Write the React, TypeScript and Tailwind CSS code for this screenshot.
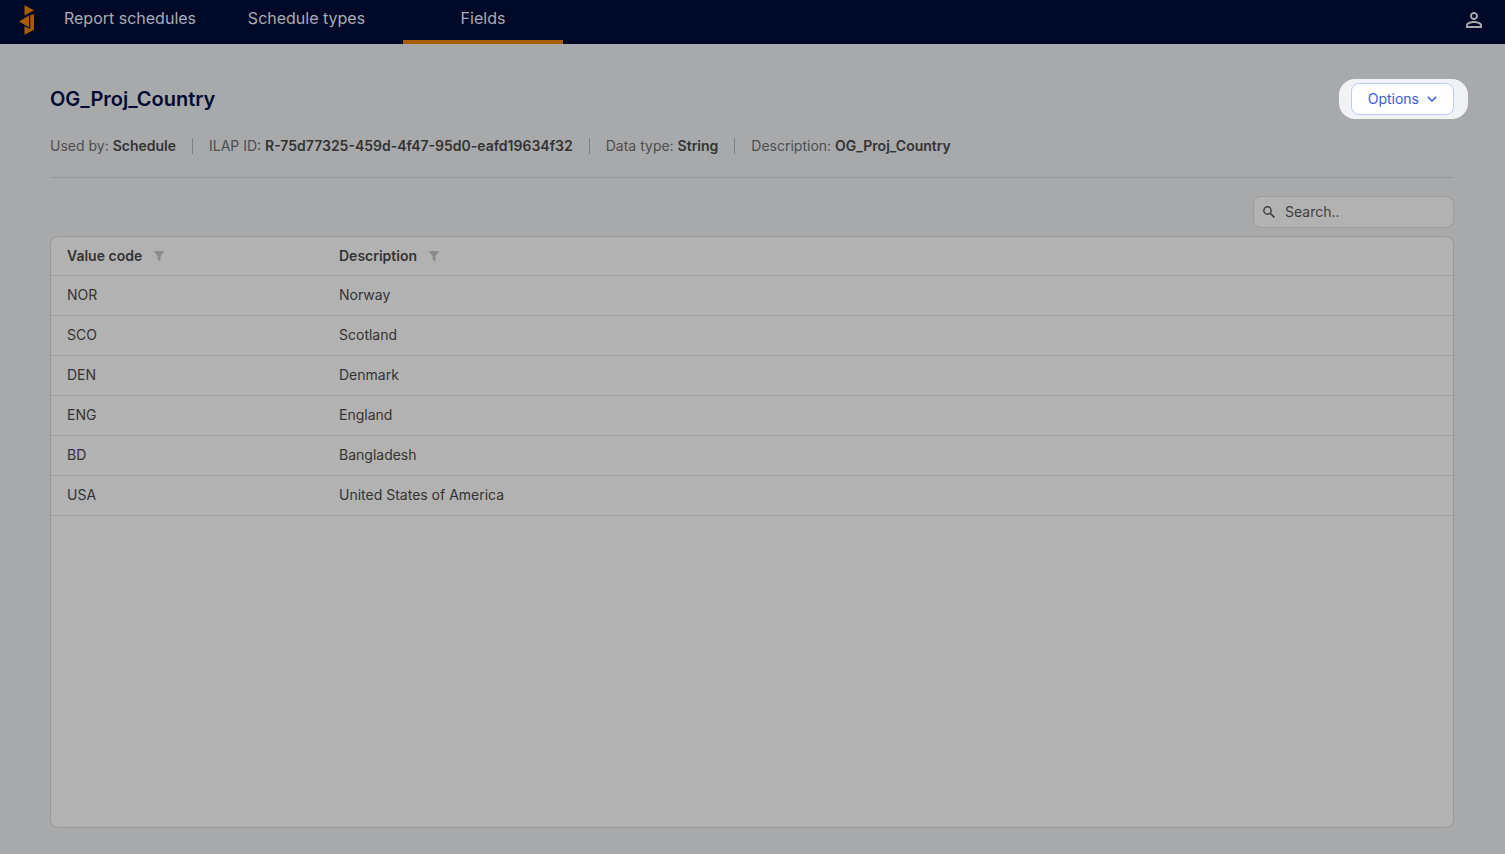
const details = [
  { label: "Used by:", value: "Schedule" },
  { label: "ILAP ID:", value: "R-75d77325-459d-4f47-95d0-eafd19634f32" },
  { label: "Data type:", value: "String" },
  { label: "Description:", value: "OG_Proj_Country" },
];

const rows = [
  ["NOR", "Norway"],
  ["SCO", "Scotland"],
  ["DEN", "Denmark"],
  ["ENG", "England"],
  ["BD", "Bangladesh"],
  ["USA", "United States of America"],
];

function Logo() {
  return (
    <svg width="16" height="30" viewBox="0 0 16 30" fill="#a85c00" aria-hidden="true">
      <path d="M5.5 0.3 15 5.2 5.5 10.4Z" />
      <path d="M10 10.500V22.200L0 16.400Z" />
      <path d="M11.300 10.300 15 9.300V24.800L5.500 29.800V21.300L11.300 24.300Z" />
    </svg>
  );
}

function UserIcon() {
  return (
    <svg width="16" height="16" viewBox="4 4 16 16" fill="#a6a8ae" aria-hidden="true">
      <path d="M12 5.900a2.100 2.100 0 1 1 0 4.200 2.100 2.100 0 0 1 0-4.200m0 9c2.970 0 6.100 1.460 6.100 2.100v1.100H5.900V17c0-.640 3.130-2.100 6.100-2.100M12 4C9.790 4 8 5.790 8 8s1.790 4 4 4 4-1.790 4-4-1.790-4-4-4m0 9c-2.670 0-8 1.340-8 4v3h16v-3c0-2.660-5.330-4-8-4" />
    </svg>
  );
}

function FilterIcon() {
  return (
    <svg width="10" height="10" viewBox="0 0 9 9" fill="#8b8b8b" aria-hidden="true">
      <path d="M0.500 0H8.500Q9.200 0.100 8.800 0.900L5.800 4.500V8.500Q5.700 9.200 5 8.900L3.500 7.900Q3.200 7.700 3.200 7.300V4.500L0.200 0.900Q-0.200 0.100 0.500 0Z" />
    </svg>
  );
}

function SearchIcon() {
  return (
    <svg width="12" height="12" viewBox="0 0 12 12" fill="none" stroke="#3c3c3c" strokeWidth="1.400" aria-hidden="true">
      <circle cx="4.500" cy="4.500" r="3.700" />
      <path d="M7.200 7.200 11.400 11.400" strokeWidth="1.600" />
    </svg>
  );
}

function Header() {
  return (
    <header className="flex h-11 items-stretch bg-[#000827] text-base text-[#abacb2]">
      <a href="#home" aria-label="Home" className="flex w-[38px] items-start pl-[19px] pt-[5px]">
        <Logo />
      </a>
      <nav className="flex">
        <a href="#reports" className="flex w-[184px] justify-center pt-1.5">Report schedules</a>
        <a href="#types" className="flex w-[169px] justify-center pt-1.5">Schedule types</a>
        <a
          href="#fields"
          aria-current="page"
          className="ml-3 flex w-40 justify-center border-b-4 border-[#a85c00] pt-1.5"
        >
          Fields
        </a>
      </nav>
      <button aria-label="Account" className="ml-auto flex items-start pr-[23px] pt-3">
        <UserIcon />
      </button>
    </header>
  );
}

export default function App() {
  return (
    <div className="flex min-h-screen flex-col bg-[#a8a9ab] font-['Inter',sans-serif] text-sm text-[#333333]">
      <Header />
      <main className="flex flex-1 flex-col pb-[26px] pl-[50px] pr-[51px] pt-[35px]">
        <div className="flex items-center justify-between">
          <h1 className="text-xl font-semibold text-[#000b35]">OG_Proj_Country</h1>
          <div className="-mr-3.5 rounded-2xl bg-[#f1f2f5] py-1 pl-3 pr-3.5">
            <button className="flex h-8 items-center gap-2 rounded-lg border border-[#bccbf8] bg-white px-4 text-[#3a5bdc]">
              Options
              <svg width="10" height="6" viewBox="0 0 10 6" fill="none" stroke="currentColor" strokeWidth="1.500" aria-hidden="true">
                <path d="M0.700 0.700 5 5 9.300 0.700" />
              </svg>
            </button>
          </div>
        </div>

        <div className="flex flex-wrap items-center border-b border-[#98999b] pb-[21px] pt-[17px]">
          {details.map((d, i) => (
            <div key={d.label} className="flex items-center">
              {i > 0 && <span className="mx-4 h-4 w-px bg-[#7f8082]" />}
              <span className="text-[#4d4e50]">
                {d.label} <strong className="font-semibold text-[#333333]">{d.value}</strong>
              </span>
            </div>
          ))}
        </div>

        <label className="mt-[18px] flex h-8 w-[201px] items-center gap-2.5 self-end rounded-lg border border-[#9d9d9d] bg-[#b2b2b2] px-[9px]">
          <SearchIcon />
          <input
            type="search"
            aria-label="Search"
            placeholder="Search.."
            className="min-w-0 flex-1 bg-transparent outline-none placeholder:text-[#3e3e3e]"
          />
        </label>

        <section className="mt-2 flex-1 rounded-lg border border-[#98999a] bg-[#b2b2b2]">
          <table className="w-full table-fixed text-left">
            <thead>
              <tr className="h-[38px] border-b border-[#a2a2a2]">
                <th className="w-[272px] px-4 font-semibold">
                  <span className="flex items-center gap-3">
                    Value code <FilterIcon />
                  </span>
                </th>
                <th className="px-4 font-semibold">
                  <span className="flex items-center gap-3">
                    Description <FilterIcon />
                  </span>
                </th>
              </tr>
            </thead>
            <tbody>
              {rows.map(([code, name]) => (
                <tr key={code} className="h-10 border-b border-[#a2a2a2]">
                  <td className="px-4">{code}</td>
                  <td className="px-4">{name}</td>
                </tr>
              ))}
            </tbody>
          </table>
        </section>
      </main>
    </div>
  );
}
